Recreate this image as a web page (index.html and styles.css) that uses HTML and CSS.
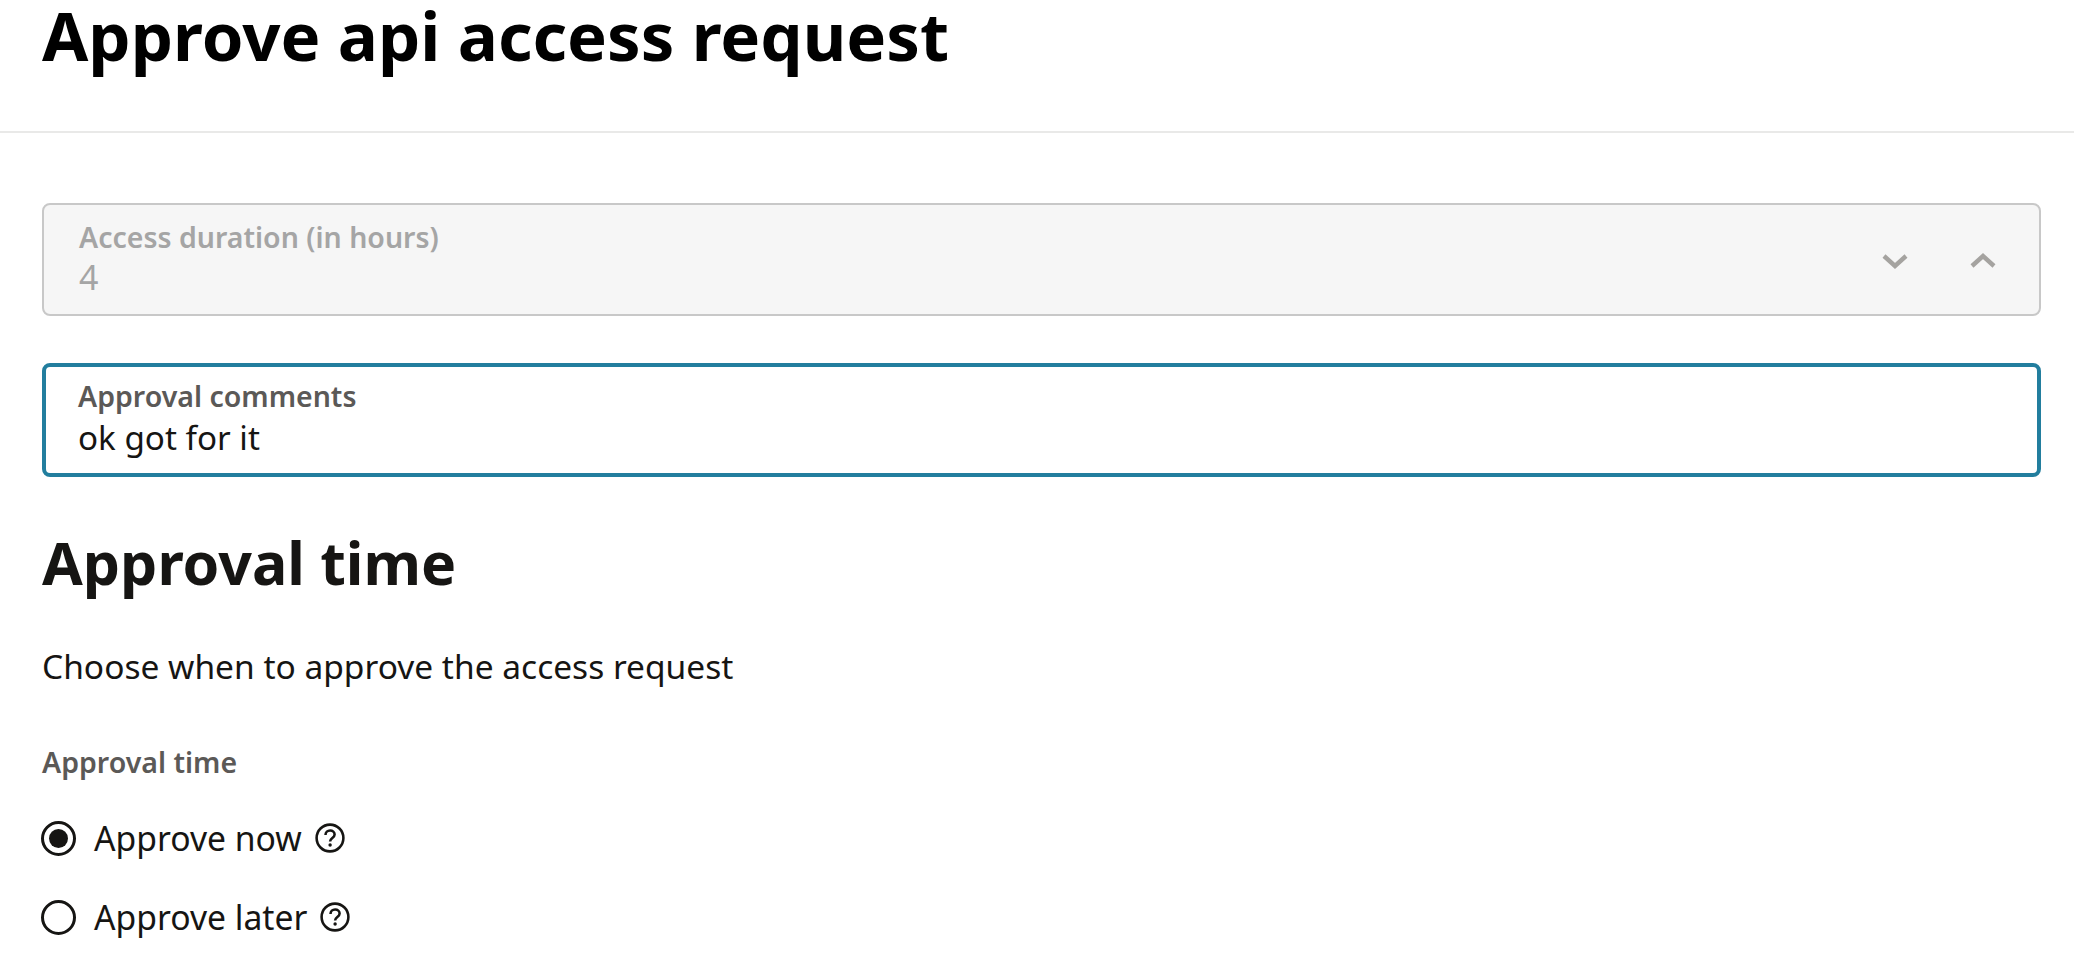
FILE: index.html
```html
<!DOCTYPE html>
<html lang="en">
<head>
<meta charset="utf-8">
<title>Approve api access request</title>
<link rel="stylesheet" href="styles.css">
</head>
<body>
<header class="page-header">
  <h1 class="page-title">Approve api access request</h1>
</header>
<main class="content">
  <div class="field field-disabled">
    <div class="field-text">
      <div class="field-label">Access duration (in hours)</div>
      <div class="field-value">4</div>
    </div>
    <div class="stepper">
      <svg class="chevron" viewBox="0 0 26 16"><path d="M2 3l11 10L24 3"/></svg>
      <svg class="chevron" viewBox="0 0 26 16"><path d="M2 13L13 3l11 10"/></svg>
    </div>
  </div>
  <div class="field field-focus">
    <div class="field-text">
      <div class="field-label">Approval comments</div>
      <div class="field-value">ok got for it</div>
    </div>
  </div>
  <h2 class="section-title">Approval time</h2>
  <p class="section-desc">Choose when to approve the access request</p>
  <div class="group-label">Approval time</div>
  <div class="radio-row">
    <span class="radio radio-on"></span>
    <span class="radio-text">Approve now</span>
    <svg class="help" viewBox="0 0 28 28"><circle cx="14" cy="14" r="12.5"/><path d="M9.8 11.2c0-2.6 1.9-4.2 4.3-4.2s4.2 1.5 4.2 3.7c0 3.3-4.2 3.2-4.2 6.5"/><circle class="dot" cx="14.1" cy="20.6" r="1.6"/></svg>
  </div>
  <div class="radio-row">
    <span class="radio"></span>
    <span class="radio-text">Approve later</span>
    <svg class="help" viewBox="0 0 28 28"><circle cx="14" cy="14" r="12.5"/><path d="M9.8 11.2c0-2.6 1.9-4.2 4.3-4.2s4.2 1.5 4.2 3.7c0 3.3-4.2 3.2-4.2 6.5"/><circle class="dot" cx="14.1" cy="20.6" r="1.6"/></svg>
  </div>
</main>
</body>
</html>
```
FILE: styles.css
```css
* { box-sizing: border-box; }
html, body { margin: 0; padding: 0; background: #fff; overflow: hidden; }
body { width: 2074px; height: 980px; font-family: "Noto Sans", "Open Sans", sans-serif; color: #161513; }
.page-header { height: 133px; border-bottom: 2px solid #e9e9e8; padding: 0 42px; }
.page-title { margin: 0; font-size: 67px; line-height: 71px; font-weight: 700; color: #000; }
.content { padding: 70px 33px 0 42px; }
.field { height: 113px; border-radius: 8px; display: flex; align-items: center; justify-content: space-between; padding: 0 35px; }
.field-disabled { background: #f6f6f6; border: 2px solid #c8c8c8; }
.field-focus { margin-top: 47px; height: 114px; border: 4px solid #227e9e; padding: 0 32px; }
.field-label { font-size: 28.5px; line-height: 30px; margin-bottom: 5px; font-weight: 600; color: #5b5957; }
.field-value { font-size: 33.2px; line-height: 43px; color: #161513; }
.field-disabled .field-label, .field-disabled .field-value { color: #a5a5a5; }
.field-disabled .field-value { line-height: 41px; font-size: 34px; }
.stepper { display: flex; gap: 62px; margin: 2px 8px 0 0; }
.chevron { width: 26px; height: 16px; fill: none; stroke: #a5a3a0; stroke-width: 4.4; }
.section-title { margin: 51px 0 0; font-size: 59px; line-height: 68px; font-weight: 700; }
.section-desc { margin: 48px 0 0; font-size: 33.5px; line-height: 44px; color: #161513; }
.group-label { margin-top: 56px; font-size: 28.5px; line-height: 36px; font-weight: 600; color: #5b5957; }
.radio-row { display: flex; align-items: center; height: 40px; margin-top: 38px; }
.radio-row + .radio-row { margin-top: 39px; }
.radio { width: 35px; height: 35px; margin-left: -1px; border: 3px solid #161513; border-radius: 50%; display: flex; align-items: center; justify-content: center; }
.radio-on::after { content: ""; width: 19px; height: 19px; border-radius: 50%; background: #161513; }
.radio-text { margin-left: 18px; font-size: 33.7px; line-height: 40px; }
.help { width: 30px; height: 30px; margin-left: 13px; fill: none; stroke: #161513; stroke-width: 2.4; }
.help .dot { fill: #161513; stroke: none; }
```
